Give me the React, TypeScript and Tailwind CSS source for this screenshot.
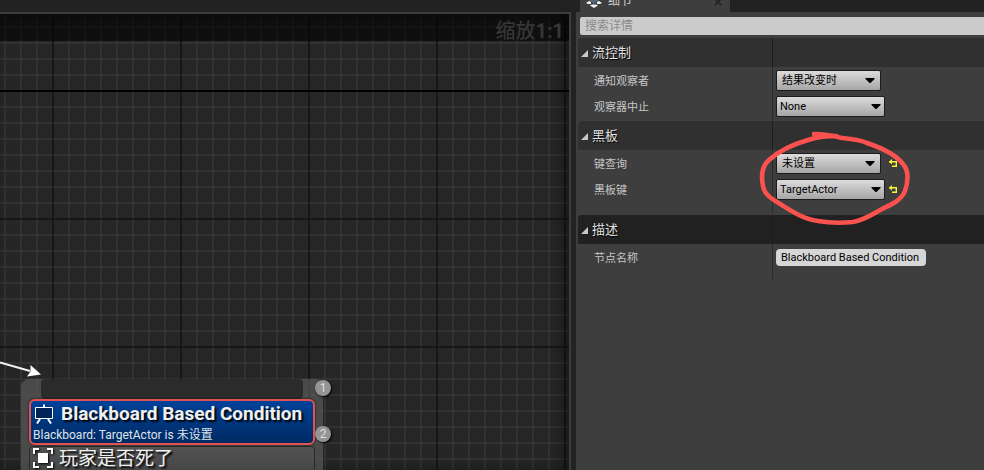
import React from "react";

interface DropdownProps {
  id: string;
  value: string;
  wide?: boolean;
}

const Dropdown: React.FC<DropdownProps> = ({ id, value, wide }) => (
  <div className="w-[109px]">
    <div className={`relative h-[21px] ${wide ? "w-[109px]" : "w-[105px]"}`}>
      <select
        id={id}
        defaultValue={value}
        className={`block h-full w-full appearance-none rounded-xs border border-[#1c1c1c] bg-linear-to-b from-[#dcdcdc] to-[#a6a6a6] pt-[2px] text-[11px] text-black ${wide ? "px-[3px]" : "px-[5px]"}`}
      >
        <option>{value}</option>
      </select>
      <svg viewBox="0 0 10 5" className={`pointer-events-none absolute top-2 h-[5px] w-[10px] ${wide ? "right-1" : "right-[6px]"}`}>
        <path d="M0.5 0h9v1L5.5 5h-1L0.5 1z" fill="#000" />
      </svg>
    </div>
  </div>
);

const ResetButton: React.FC = () => (
  <button type="button" aria-label="reset" className="ml-1 h-2 w-2">
    <svg viewBox="0 0 8 8" className="h-2 w-2">
      <path d="M0 2h8v6H3V6.600h3.600V3.400H0z" fill="#f6f43a" />
      <path d="M3 0v5.400L0 2.700z" fill="#f6f43a" />
    </svg>
  </button>
);

interface SectionProps {
  title: string;
  bodyClass: string;
  dark?: boolean;
  children: React.ReactNode;
}

const Section: React.FC<SectionProps> = ({ title, bodyClass, dark, children }) => (
  <section>
    <h2 className={`flex h-[29px] rounded-tl-sm text-[13px] text-[#e0e0e0] ${dark ? "bg-[#212121]" : "bg-[#303030]"}`}>
      <button type="button" className="flex w-[195px] items-center gap-1 border-r border-[#1e1e1e] pl-[3px] [text-shadow:1px_1px_1px_#000]">
        <svg viewBox="0 0 7 7" className="mt-[2px] h-[7px] w-[7px]">
          <path d="M7 0v7H0z" fill="#c8c8c8" />
        </svg>
        {title}
      </button>
    </h2>
    <div className={`flex ${bodyClass}`}>
      <div className="w-full bg-[linear-gradient(#2a2a2a,#2a2a2a)] bg-size-[1px_100%] bg-position-[194px_0] bg-no-repeat">
        {children}
      </div>
    </div>
  </section>
);

interface RowProps {
  id: string;
  label: string;
  children: React.ReactNode;
}

const Row: React.FC<RowProps> = ({ id, label, children }) => (
  <div className="flex h-[26px] items-center">
    <label htmlFor={id} className="w-[198px] pb-px pl-4 font-['Noto_Sans_CJK_SC',sans-serif] text-[11px] leading-4 text-[#c6c6c6]">
      {label}
    </label>
    {children}
  </div>
);

// red pen loop drawn over the blackboard section
const PenMark: React.FC = () => (
  <svg viewBox="756 128 156 100" className="pointer-events-none absolute left-[180px] top-32 h-[100px] w-[156px]" fill="none" stroke="#fb5250" strokeWidth="4.600" strokeLinecap="round" strokeLinejoin="round">
    <path d="M814 134C824 134 834 136 842 138C852 139 861 140 867 143C882 148 896 155 903 164C909 171 908 182 905 191C901 201 890 205 882 209C873 214 865 220 853 222C843 223 829 223 818 221C803 219 791 211 777 202C769 197 764 193 763 186C761 176 762 166 769 160C779 151 794 144 808 140C817 137 824 136 836 136" />
  </svg>
);

const DetailsPanel: React.FC = () => (
  <aside className="relative flex w-[408px] shrink-0 flex-col">
    <div className="ml-1 flex h-3 w-[150px] items-end bg-[#3e3e3e] pb-1 pl-[6px] pr-2 text-xs leading-4 text-[#d0d0d0]">
      <svg viewBox="0 0 16 14" className="h-[14px] w-4 shrink-0">
        <path d="M8 2l5 4-5 4-5-4z" fill="#56627e" />
        <path d="M0 9l3-2 2 1v2H2zM16 9l-3-2-2 1v2h3zM8 14l-4-2.500 2-1h4l2 1z" fill="#f2f2f2" />
      </svg>
      <span className="ml-[6px] font-['Noto_Sans_CJK_SC',sans-serif]">细节</span>
      <button type="button" aria-label="close" className="mb-[2px] ml-auto">
        <svg viewBox="0 0 8 8" className="h-2 w-2" stroke="#202020" strokeWidth="1.500">
          <path d="M1 1l6 6M7 1L1 7" />
        </svg>
      </button>
    </div>
    <div className="flex-1 bg-[#3e3e3e] pl-[2px] pt-[5px]">
      <div className="pl-[2px]">
        <input
          type="text"
          aria-label="搜索详情"
          placeholder="搜索详情"
          className="block h-[18px] w-full rounded-l-xs bg-[#cbcbcb] px-[5px] text-xs placeholder:text-[#8a8a8a]"
        />
      </div>
      <div className="mt-[3px]">
        <Section title="流控制" bodyClass="pb-[2px]">
          <Row id="notify" label="通知观察者">
            <Dropdown id="notify" value="结果改变时" />
          </Row>
          <Row id="abort" label="观察器中止">
            <Dropdown id="abort" value="None" wide />
          </Row>
        </Section>
        <Section title="黑板" bodyClass="h-[65px] pb-[2px]">
          <Row id="query" label="键查询">
            <Dropdown id="query" value="未设置" />
            <ResetButton />
          </Row>
          <Row id="key" label="黑板键">
            <Dropdown id="key" value="TargetActor" wide />
            <ResetButton />
          </Row>
        </Section>
        <Section title="描述" bodyClass="h-[35px]" dark>
          <Row id="name" label="节点名称">
            <input
              id="name"
              type="text"
              defaultValue="Blackboard Based Condition"
              className="h-[17px] w-[150px] rounded-sm bg-[#d6d6d6] px-[5px] text-[11px] text-black"
            />
          </Row>
        </Section>
      </div>
    </div>
    <PenMark />
  </aside>
);

const Badge: React.FC<{ value: number; className: string }> = ({ value, className }) => (
  <span className={`absolute flex h-4 w-4 items-center justify-center rounded-full bg-[#949494] text-xs text-[#dedede] shadow-[1px_1px_2px_#000] ${className}`}>
    {value}
  </span>
);

const TreeNode: React.FC = () => (
  <div className="absolute left-[21px] top-[365px] w-[302px] rounded-t-lg bg-[#5a5a5a]/70 px-2 text-[#f0f0f0]">
    <div className="ml-3 h-5 w-[262px] rounded-sm bg-[#2b2b2b]" />
    <div className="h-[46px] w-[286px] rounded-md border-2 border-[#e25252] bg-linear-to-b from-[#00429a] to-[#002a63] pl-[2px] shadow-[0_0_2px_#000]">
      <div className="flex h-[26px] items-center gap-1 text-[19px] font-bold [text-shadow:2px_2px_2px_#000]">
        <svg viewBox="0 0 22 20" className="h-5 w-[22px] shrink-0" fill="none" stroke="#fff">
          <path d="M2.500 3.500h17v11h-17z" fill="#002457" />
          <path d="M11 .5v3" strokeWidth="2" />
          <path d="M7 15l-3 4.500M15 15l3 4.500" strokeWidth="2" />
        </svg>
        <span className="ml-[2px] whitespace-nowrap">Blackboard Based Condition</span>
      </div>
      <p className="text-xs leading-4 text-[#dfe3ea]">Blackboard: TargetActor is 未设置</p>
    </div>
    <div className="mt-px flex h-10 w-[286px] items-start gap-[6px] rounded-t-sm border border-[#2a2a2a] bg-linear-to-b from-[#525252] to-[#404040] pl-[3px]">
      <svg viewBox="0 0 20 20" className="mt-px h-5 w-5 drop-shadow-[1px_1px_1px_#000]" fill="none" stroke="#fff" strokeWidth="2">
        <path d="M6 1H1v5M14 1h5v5M6 19H1v-5M14 19h5v-5" />
        <path d="M5 5h10v10H5z" fill="#fff" stroke="none" />
      </svg>
      <span className="font-['Noto_Sans_CJK_SC',sans-serif] text-[19px] leading-5 [text-shadow:2px_2px_2px_#000]">玩家是否死了</span>
    </div>
    <Badge value={1} className="left-[294px] top-[1px]" />
    <Badge value={2} className="left-[294px] top-[47px]" />
  </div>
);

const GraphCanvas: React.FC = () => (
  <section className="relative mt-3 flex-1 overflow-hidden border-r-2 border-t-2 border-[#3d3d3d] bg-[#262626]">
    <div className="absolute inset-0 bg-[linear-gradient(90deg,#323232_2px,transparent_2px),linear-gradient(#323232_2px,transparent_2px)] bg-size-[16px_16px] bg-position-[4px_12px]" />
    <div className="absolute inset-0 bg-[linear-gradient(90deg,#171717_2px,transparent_2px),linear-gradient(#171717_2px,transparent_2px)] bg-size-[128px_128px] bg-position-[52px_76px]" />
    {/* origin axis */}
    <div className="absolute inset-x-0 top-[76px] h-[2px] bg-black" />
    <div className="absolute inset-0 shadow-[inset_-6px_0_16px_#0006]" />
    <svg viewBox="0 0 44 24" className="absolute left-0 top-[342px] h-6 w-11">
      <path d="M0 6.500L30 15" stroke="#f4f4f4" strokeWidth="2" />
      <path d="M30.500 9L41 18.500L27 20.500l3.500-5z" fill="#fff" />
    </svg>
    <TreeNode />
    <div className="relative flex h-[27px] items-end justify-end bg-black/60 pr-[5px] text-xl font-bold leading-5 text-[#363636]">
      <p>
        <span className="font-['Noto_Sans_CJK_SC',sans-serif] font-medium">缩放</span>1:1
      </p>
    </div>
  </section>
);

const App: React.FC = () => (
  <main className="flex h-screen gap-[5px] overflow-hidden bg-[#222222] font-['Roboto','Noto_Sans_CJK_SC',sans-serif]">
    <GraphCanvas />
    <DetailsPanel />
  </main>
);

export default App;
